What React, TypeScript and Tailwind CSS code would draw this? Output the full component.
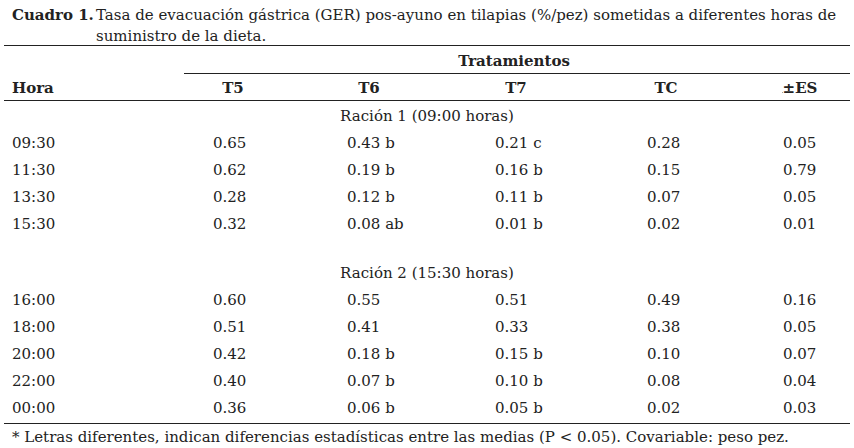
const font = "font-['DejaVu_Serif',serif]";

type Row = { h: string; v: string[] };

const racion1: Row[] = [
  { h: '09:30', v: ['0.65', '0.43 b', '0.21 c', '0.28', '0.05'] },
  { h: '11:30', v: ['0.62', '0.19 b', '0.16 b', '0.15', '0.79'] },
  { h: '13:30', v: ['0.28', '0.12 b', '0.11 b', '0.07', '0.05'] },
  { h: '15:30', v: ['0.32', '0.08 ab', '0.01 b', '0.02', '0.01'] },
];

const racion2: Row[] = [
  { h: '16:00', v: ['0.60', '0.55', '0.51', '0.49', '0.16'] },
  { h: '18:00', v: ['0.51', '0.41', '0.33', '0.38', '0.05'] },
  { h: '20:00', v: ['0.42', '0.18 b', '0.15 b', '0.10', '0.07'] },
  { h: '22:00', v: ['0.40', '0.07 b', '0.10 b', '0.08', '0.04'] },
  { h: '00:00', v: ['0.36', '0.06 b', '0.05 b', '0.02', '0.03'] },
];

// column widths (px) and left padding of values so they line up with the source
const cols = [
  { w: 'w-[161px]', pl: 'pl-2' },
  { w: 'w-[136px]', pl: 'pl-[48px]' },
  { w: 'w-[136px]', pl: 'pl-[46px]' },
  { w: 'w-[158px]', pl: 'pl-[58px]' },
  { w: 'w-[142px]', pl: 'pl-[52px]' },
  { w: 'w-[113px]', pl: 'pl-[46px]' },
];

function DataRow({ row }: { row: Row }) {
  const cells = [row.h, ...row.v];
  return (
    <div className="flex h-[27px] items-center pt-[3px]">
      {cells.map((c, i) => (
        <div key={i} className={`${cols[i].w} ${cols[i].pl} whitespace-nowrap`}>
          {c}
        </div>
      ))}
    </div>
  );
}

export default function App() {
  return (
    <div className={`${font} h-[448px] w-[854px] bg-white text-[15px] leading-none text-[#222]`}>
      {/* caption */}
      <div className="flex pl-3 pt-[8px]">
        <span className="w-[84px] shrink-0 font-bold">Cuadro 1.</span>
        <div className="flex flex-col gap-[6px]">
          <span>Tasa de evacuación gástrica (GER) pos-ayuno en tilapias (%/pez) sometidas a diferentes horas de</span>
          <span>suministro de la dieta.</span>
        </div>
      </div>

      <div className="mx-1 mt-[1px] border-t border-[#222]">
        {/* Tratamientos */}
        <div className="ml-[180px] flex h-[28px] items-center justify-center border-b border-[#222] pt-[3px] pr-[6px] font-bold">
          Tratamientos
        </div>

        {/* column headers */}
        <div className="flex h-[27px] items-center border-b border-[#222] pt-[3px] font-bold">
          <div className="w-[161px] pl-2">Hora</div>
          <div className="w-[136px] text-center">T5</div>
          <div className="w-[136px] text-center">T6</div>
          <div className="w-[158px] text-center">T7</div>
          <div className="w-[142px] text-center">TC</div>
          <div className="w-[113px] pl-[13px] text-center">
            <span className="underline decoration-1 underline-offset-[-1px]">±</span>ES
          </div>
        </div>

        <div className="flex h-[27px] items-center justify-center pt-[4px]">Ración 1 (09:00 horas)</div>
        {racion1.map((r) => (
          <DataRow key={r.h} row={r} />
        ))}

        <div className="h-[22px]" />
        <div className="flex h-[27px] items-center justify-center pt-[3px]">Ración 2 (15:30 horas)</div>
        <div className="border-b border-[#222] pb-[3px]">
          {racion2.map((r) => (
            <DataRow key={r.h} row={r} />
          ))}
        </div>

        <div className="pl-2 pt-[6px]">
          * Letras diferentes, indican diferencias estadísticas entre las medias (P &lt; 0.05). Covariable: peso pez.
        </div>
      </div>
    </div>
  );
}
